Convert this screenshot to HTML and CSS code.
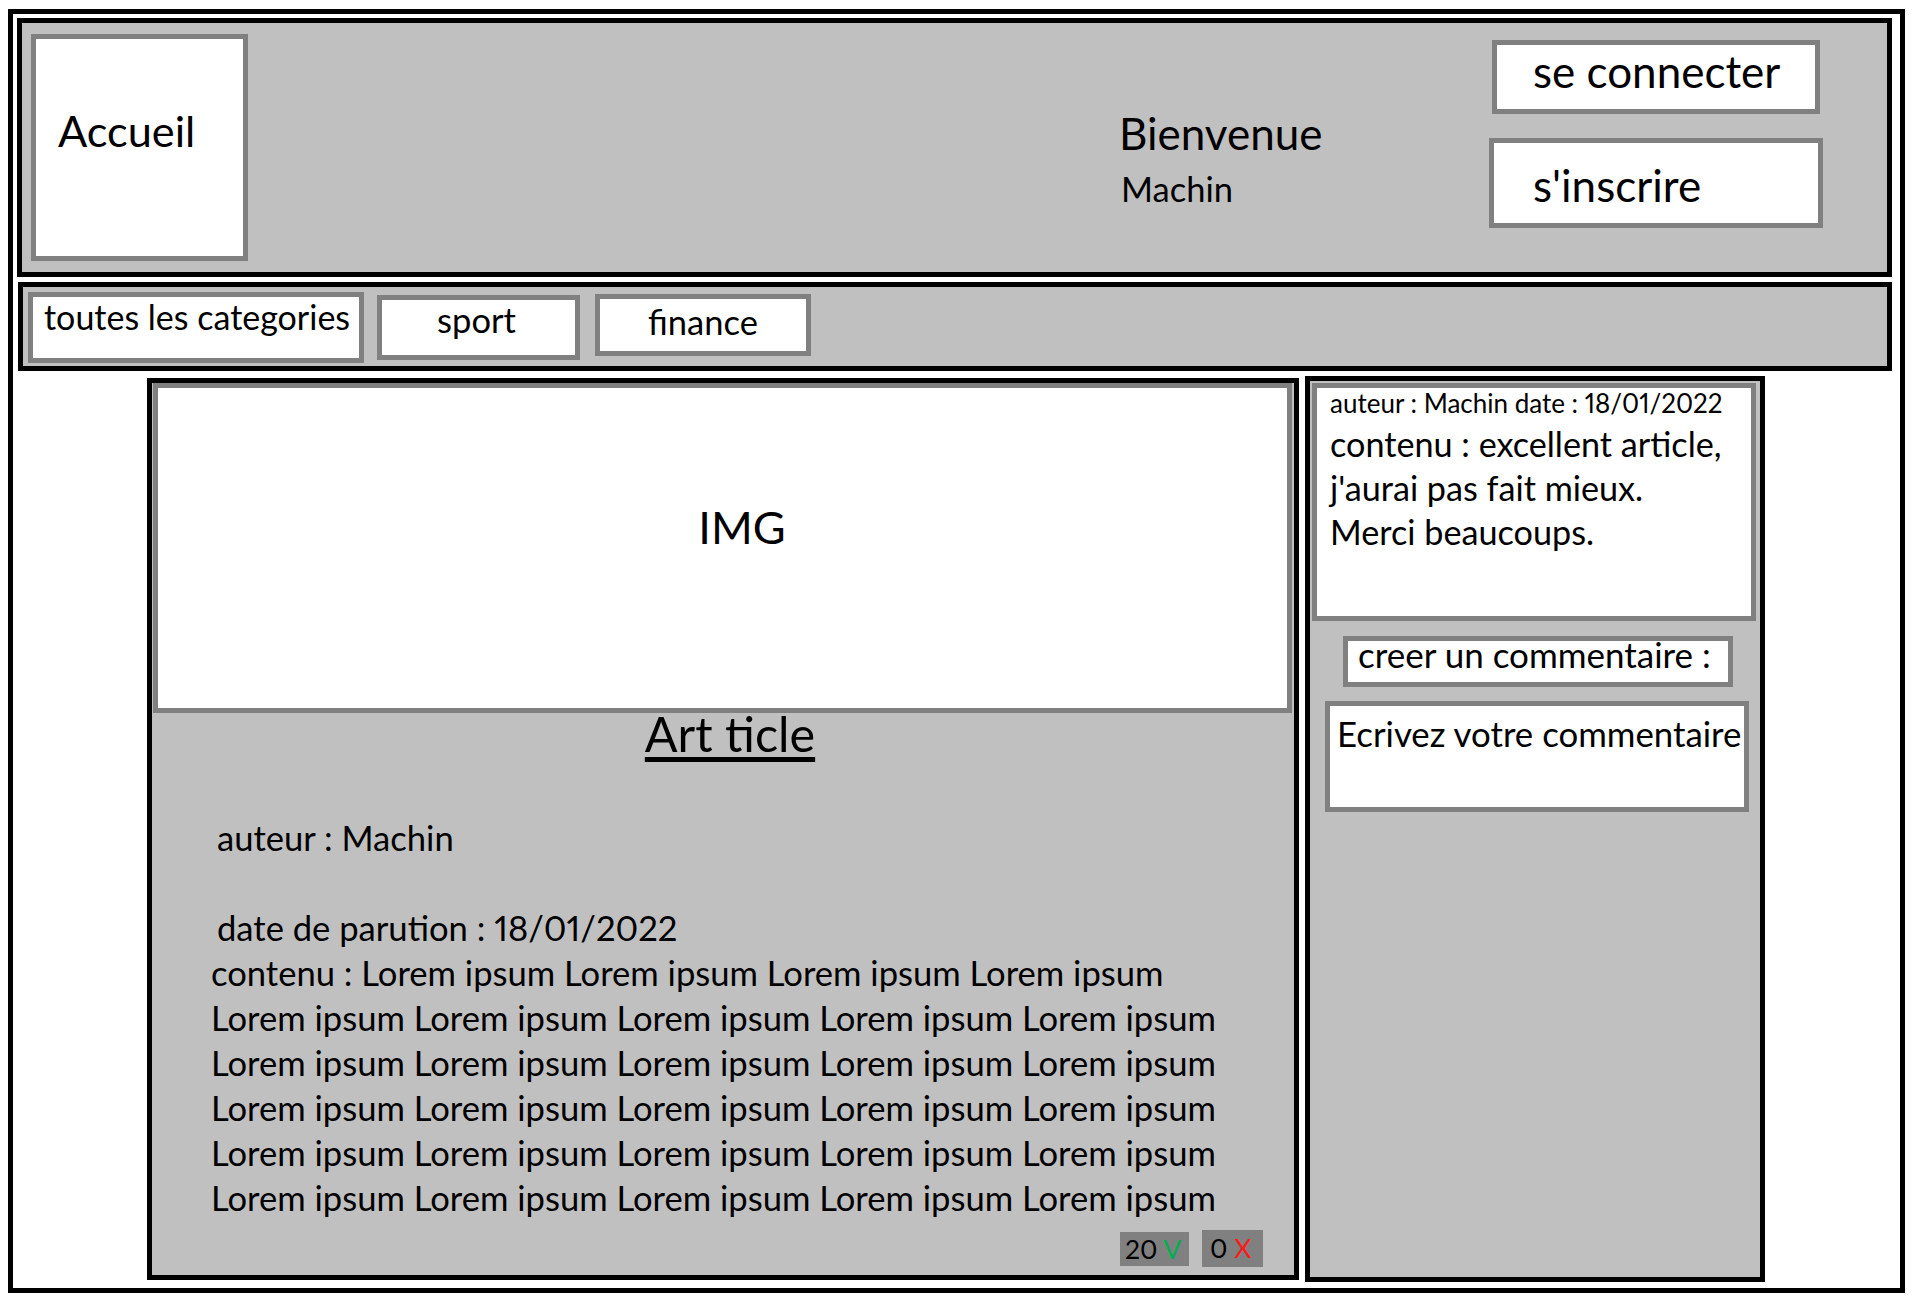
FILE: index.html
```html
<!DOCTYPE html>
<html lang="fr">
<head>
<meta charset="utf-8">
<title>Art ticle</title>
<link rel="stylesheet" href="styles.css">
</head>
<body>
<div class="page">
  <header class="header">
    <div class="home">Accueil</div>
    <div class="welcome">
      <div class="welcome-title">Bienvenue</div>
      <div class="welcome-name">Machin</div>
    </div>
    <div class="auth">
      <div class="btn btn-login">se connecter</div>
      <div class="btn btn-signup">s'inscrire</div>
    </div>
  </header>

  <nav class="nav">
    <div class="cat cat-all">toutes les categories</div>
    <div class="cat cat-sport">sport</div>
    <div class="cat cat-finance">finance</div>
  </nav>

  <main class="main">
    <article class="article">
      <div class="img-box">IMG</div>
      <h1 class="title">Art ticle</h1>
      <div class="body">
        <p class="line indent">auteur : Machin</p>
        <p class="line blank"></p>
        <p class="line indent">date de parution : 18/01/2022</p>
        <p class="line">contenu : Lorem ipsum Lorem ipsum Lorem ipsum Lorem ipsum</p>
        <p class="line">Lorem ipsum Lorem ipsum Lorem ipsum Lorem ipsum Lorem ipsum</p>
        <p class="line">Lorem ipsum Lorem ipsum Lorem ipsum Lorem ipsum Lorem ipsum</p>
        <p class="line">Lorem ipsum Lorem ipsum Lorem ipsum Lorem ipsum Lorem ipsum</p>
        <p class="line">Lorem ipsum Lorem ipsum Lorem ipsum Lorem ipsum Lorem ipsum</p>
        <p class="line">Lorem ipsum Lorem ipsum Lorem ipsum Lorem ipsum Lorem ipsum</p>
      </div>
      <div class="votes">
        <div class="vote vote-up">20 <span class="mark-v">V</span></div>
        <div class="vote vote-down">0 <span class="mark-x">X</span></div>
      </div>
    </article>

    <aside class="sidebar">
      <div class="comment">
        <div class="comment-meta">auteur : Machin date : 18/01/2022</div>
        <div class="comment-body">
          <p class="comment-line">contenu : excellent article,</p>
          <p class="comment-line">j'aurai pas fait mieux.</p>
          <p class="comment-line">Merci beaucoups.</p>
        </div>
      </div>
      <div class="new-label">creer un commentaire :</div>
      <div class="new-input">Ecrivez votre commentaire</div>
    </aside>
  </main>
</div>
</body>
</html>
```

FILE: styles.css
```css
* {
  box-sizing: border-box;
}

body {
  margin: 9px 0 0 8px;
  background: #ffffff;
  color: #000000;
  font-family: Lato, "Open Sans", "Liberation Sans", sans-serif;
  font-variant-numeric: proportional-nums;
}

p {
  margin: 0;
}

.page {
  width: 1897px;
  height: 1284px;
  border: 5px solid #000000;
  padding: 4px 8px 0 4px;
}

/* ---------- header ---------- */
.header {
  display: flex;
  align-items: flex-start;
  height: 259px;
  border: 5px solid #000000;
  background: #c0c0c0;
  padding: 11px 0 11px 9px;
}

.home {
  width: 217px;
  height: 227px;
  border: 5px solid #808080;
  background: #ffffff;
  font-size: 43.3px;
  line-height: 52px;
  padding: 65px 0 0 22px;
  white-space: nowrap;
}

.welcome {
  margin: 74px 0 0 871px;
  white-space: nowrap;
}

.welcome-title {
  font-size: 44px;
  line-height: 50px;
}

.welcome-name {
  margin: 11px 0 0 2px;
  font-size: 34.5px;
  line-height: 40px;
}

.auth {
  display: flex;
  flex-direction: column;
  align-items: center;
  width: 334px;
  margin: 6px 64px 0 auto;
}

.btn {
  border: 5px solid #808080;
  background: #ffffff;
  font-size: 44px;
  line-height: 50px;
  white-space: nowrap;
}

.btn-login {
  width: 328px;
  height: 74px;
  padding: 1px 0 0 36px;
}

.btn-signup {
  width: 334px;
  height: 90px;
  margin-top: 24px;
  padding: 17px 0 0 39px;
}

/* ---------- nav ---------- */
.nav {
  display: flex;
  align-items: flex-start;
  height: 89px;
  margin: 5px 0 0 1px;
  border: 5px solid #000000;
  background: #c0c0c0;
}

.cat {
  border: 5px solid #808080;
  background: #ffffff;
  font-size: 34.5px;
  line-height: 40px;
  white-space: nowrap;
}

.cat-all {
  width: 336px;
  height: 71px;
  margin: 5px 0 0 5px;
  padding-left: 11px;
  font-size: 34px;
}

.cat-sport {
  width: 203px;
  height: 65px;
  margin: 8px 0 0 13px;
  text-align: center;
  padding-right: 4px;
}

.cat-finance {
  width: 216px;
  height: 62px;
  margin: 7px 0 0 15px;
  padding-top: 3px;
  text-align: center;
}

/* ---------- main ---------- */
.main {
  display: flex;
  align-items: flex-start;
  margin-left: 130px;
}

.article {
  display: flex;
  flex-direction: column;
  width: 1152px;
  height: 902px;
  margin-top: 7px;
  border: 5px solid #000000;
  background: #c0c0c0;
}

.img-box {
  width: 1139px;
  height: 330px;
  margin-left: 1px;
  border: 5px solid #808080;
  background: #ffffff;
  font-size: 45px;
  line-height: 56px;
  text-align: center;
  padding: 111px 0 0 39px;
}

.title {
  margin: 0;
  padding-left: 14px;
  font-size: 48.5px;
  font-weight: normal;
  line-height: 40px;
  text-align: center;
  text-decoration: underline;
  text-decoration-thickness: 5px;
  text-underline-offset: 5px;
}

.body {
  margin-top: 62px;
  padding-left: 59px;
}

.line {
  height: 45px;
  font-size: 34.6px;
  line-height: 45px;
  white-space: nowrap;
}

.indent {
  padding-left: 6px;
}

.votes {
  display: flex;
  justify-content: flex-end;
  align-items: flex-end;
  gap: 13px;
  margin: auto 31px 8px 0;
}

.vote {
  background: #808080;
  font-size: 26.5px;
  white-space: nowrap;
}

.vote-up {
  width: 69px;
  height: 34px;
  line-height: 34px;
  padding-left: 5px;
  margin-bottom: 1px;
}

.vote-down {
  width: 61px;
  height: 37px;
  line-height: 37px;
  padding-left: 8px;
}

.mark-v {
  color: #00b050;
}

.mark-x {
  color: #ff1a1a;
}

/* ---------- sidebar ---------- */
.sidebar {
  width: 460px;
  height: 906px;
  margin: 5px 0 0 6px;
  border: 5px solid #000000;
  background: #c0c0c0;
  padding-top: 2px;
}

.comment {
  width: 444px;
  height: 238px;
  margin-left: 2px;
  border: 5px solid #808080;
  background: #ffffff;
  padding-left: 13px;
  white-space: nowrap;
}

.comment-meta {
  font-size: 26px;
  line-height: 30px;
}

.comment-body {
  margin-top: 4px;
}

.comment-line {
  font-size: 34.2px;
  line-height: 44px;
}

.new-label {
  width: 390px;
  height: 51px;
  margin: 15px 0 0 33px;
  border: 5px solid #808080;
  background: #ffffff;
  padding-left: 10px;
  font-size: 35px;
  line-height: 26px;
  white-space: nowrap;
}

.new-input {
  width: 424px;
  height: 111px;
  margin: 14px 0 0 15px;
  border: 5px solid #808080;
  background: #ffffff;
  padding: 8px 0 0 7px;
  font-size: 34.8px;
  line-height: 40px;
  white-space: nowrap;
}
```
